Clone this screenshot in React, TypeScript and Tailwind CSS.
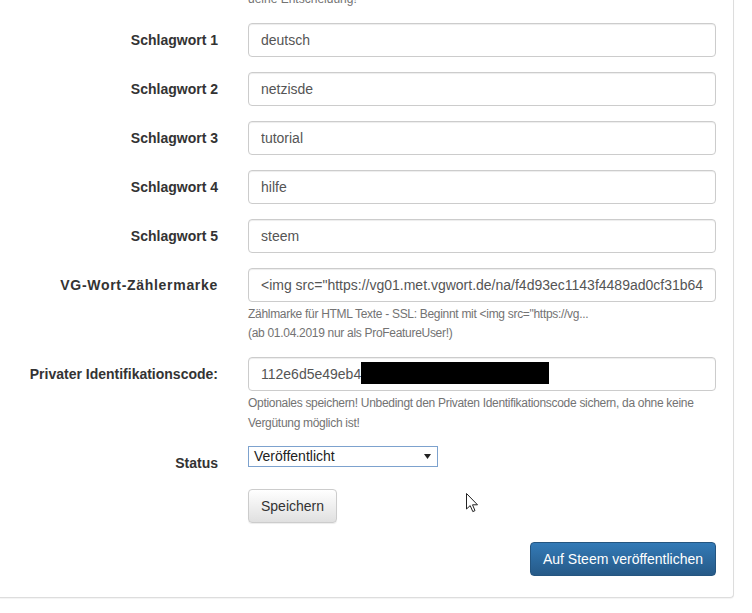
import React from "react";

const font = { fontFamily: '"Liberation Sans", Arial, Helvetica, sans-serif' };

function Label({ children, extra = "" }: { children: React.ReactNode; extra?: string }) {
  return (
    <div
      className={
        "w-[218px] shrink-0 whitespace-nowrap pt-[7px] text-right text-[14px] font-bold leading-[20px] text-[#333] " +
        extra
      }
    >
      {children}
    </div>
  );
}

function Input({ value }: { value: string }) {
  return (
    <div className="flex h-[34px] w-[468px] items-center rounded-[4px] border border-[#ccc] bg-white px-[12px] text-[14px] text-[#555] shadow-[inset_0_1px_1px_rgba(0,0,0,0.075)]">
      <span className="block w-full overflow-hidden whitespace-nowrap">{value}</span>
    </div>
  );
}

function Row({
  label,
  children,
  className = "mb-[15px]",
  labelExtra = "",
}: {
  label: string;
  children: React.ReactNode;
  className?: string;
  labelExtra?: string;
}) {
  return (
    <div className={"flex items-start " + className}>
      <Label extra={labelExtra}>{label}</Label>
      <div className="ml-[30px] w-[468px]">{children}</div>
    </div>
  );
}

export default function App() {
  const tags = ["deutsch", "netzisde", "tutorial", "hilfe", "steem"];
  return (
    <div className="relative h-[613px] w-[752px] overflow-hidden bg-white" style={font}>
      <div className="w-[734px] rounded-br-[4px] border-r border-b border-[#ddd] bg-white pb-[21px] shadow-[0_1px_1px_rgba(0,0,0,0.05)]">
        <div className="-mt-[11px] mb-[14px] pl-[248px] text-[12px] leading-[20px] text-[#737373]">
          deine Entscheidung!
        </div>

        {tags.map((t, i) => (
          <Row key={t} label={`Schlagwort ${i + 1}`}>
            <Input value={t} />
          </Row>
        ))}

        <Row label="VG-Wort-Zählermarke" className="mb-[14px]" labelExtra="tracking-[0.7px]">
          <Input value={'<img src="https://vg01.met.vgwort.de/na/f4d93ec1143f4489ad0cf31b64'} />
          <div className="mt-[3px] whitespace-nowrap text-[12px] leading-[19px] tracking-[-0.3px] text-[#737373]">
            <div>Zählmarke für HTML Texte - SSL: Beginnt mit &lt;img src="https://vg...</div>
            <div>(ab 01.04.2019 nur als ProFeatureUser!)</div>
          </div>
        </Row>

        <Row label="Privater Identifikationscode:" className="mb-[13px]">
          <div className="relative">
            <Input value="112e6d5e49eb4" />
            <div className="absolute left-[113px] top-[5px] h-[22px] w-[188px] bg-black" />
          </div>
          <div className="mt-[2px] whitespace-nowrap text-[12px] leading-[20px] tracking-[-0.3px] text-[#737373]">
            <div>Optionales speichern! Unbedingt den Privaten Identifikationscode sichern, da ohne keine</div>
            <div>Vergütung möglich ist!</div>
          </div>
        </Row>

        <Row label="Status" className="mb-[16px]">
          <div className="flex h-[21px] w-[190px] items-center justify-between border border-[#7da2ce] bg-white pl-[5px] pr-[6px] text-[14px] text-[#222]">
            <span>Veröffentlicht</span>
            <svg width="7" height="5" viewBox="0 0 7 5">
              <path d="M0 0 L7 0 L3.5 5 Z" fill="#222" />
            </svg>
          </div>
        </Row>

        <div className="flex pl-[248px]">
          <div className="flex h-[34px] w-[89px] items-center justify-center rounded-[4px] border border-[#ccc] bg-gradient-to-b from-white to-[#e0e0e0] text-[14px] text-[#333] shadow-[inset_0_1px_0_rgba(255,255,255,0.15),0_1px_1px_rgba(0,0,0,0.075)]">
            Speichern
          </div>
        </div>

        <div className="mt-[19px] flex justify-end pr-[17px]">
          <div className="flex h-[34px] w-[186px] items-center justify-center rounded-[4px] border border-[#245580] bg-gradient-to-b from-[#337ab7] to-[#265a88] text-[14px] text-white">
            Auf Steem veröffentlichen
          </div>
        </div>
      </div>

      <svg
        className="absolute left-[466px] top-[493px]"
        width="13"
        height="20"
        viewBox="0 0 13 20"
      >
        <path
          d="M0.5 0.5 L0.5 16 L4.2 12.6 L6.8 18.6 L9 17.6 L6.5 11.8 L11.5 11.8 Z"
          fill="white"
          stroke="#222"
          strokeWidth="1"
          strokeLinejoin="round"
        />
      </svg>
    </div>
  );
}
